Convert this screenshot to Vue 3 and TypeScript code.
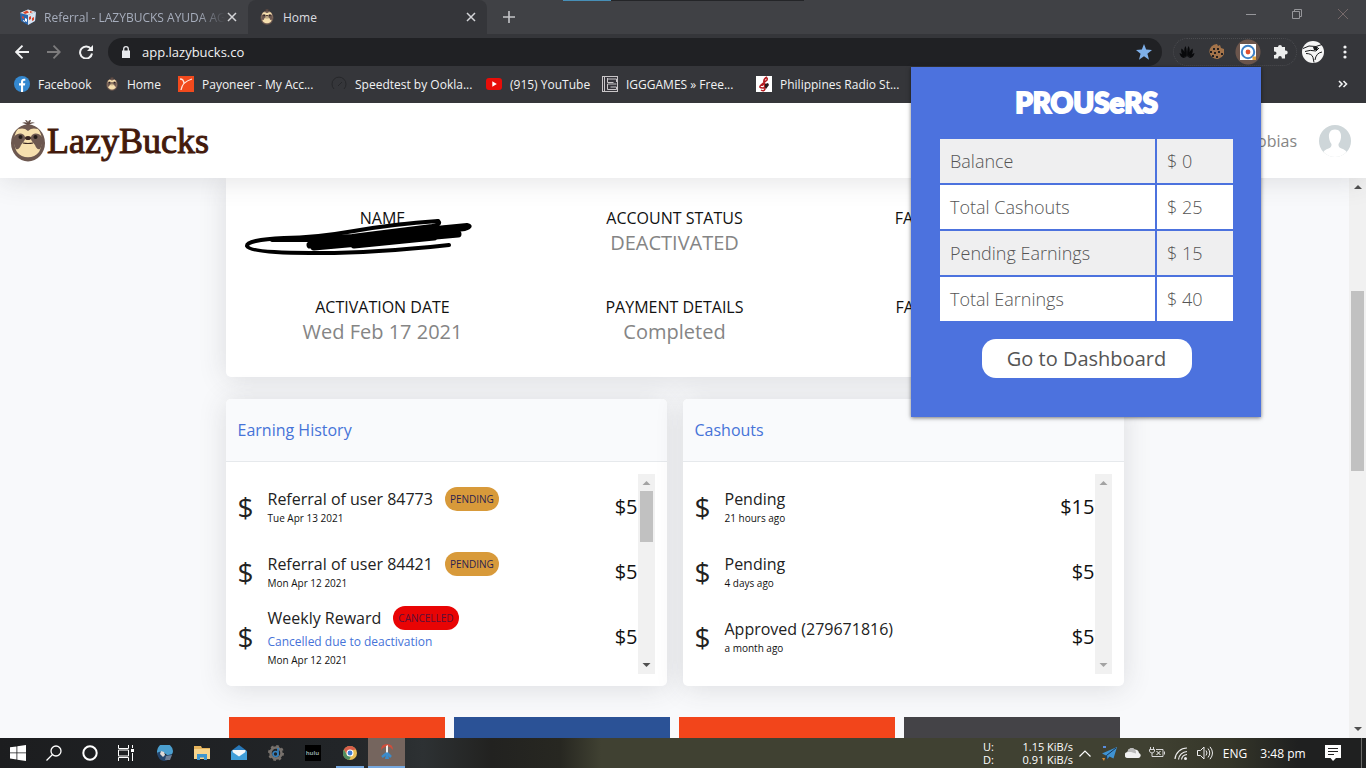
<script setup lang="ts">
interface Earning {
  title: string
  date: string
  amount: string
  badge?: 'Pending' | 'Cancelled'
  note?: string
}

const bookmarks = [
  { icon: 'facebook', label: 'Facebook' },
  { icon: 'sloth', label: 'Home' },
  { icon: 'payoneer', label: 'Payoneer - My Acc...' },
  { icon: 'gauge', label: 'Speedtest by Ookla...' },
  { icon: 'youtube', label: '(915) YouTube' },
  { icon: 'igg', label: 'IGGGAMES » Free...' },
  { icon: 'music', label: 'Philippines Radio St...' },
]

const stats = [
  { label: 'NAME', value: '', struck: true },
  { label: 'ACCOUNT STATUS', value: 'DEACTIVATED', struck: false },
  { label: 'FACEBOOK STATUS', value: '', struck: false },
  { label: 'ACTIVATION DATE', value: 'Wed Feb 17 2021', struck: false },
  { label: 'PAYMENT DETAILS', value: 'Completed', struck: false },
  { label: 'FACEBOOK GROUP', value: '', struck: false },
]

const earnings: Earning[] = [
  { title: 'Referral of user 84773', date: 'Tue Apr 13 2021', amount: '$5', badge: 'Pending' },
  { title: 'Referral of user 84421', date: 'Mon Apr 12 2021', amount: '$5', badge: 'Pending' },
  { title: 'Weekly Reward', date: 'Mon Apr 12 2021', amount: '$5', badge: 'Cancelled', note: 'Cancelled due to deactivation' },
]

const cashouts: Earning[] = [
  { title: 'Pending', date: '21 hours ago', amount: '$15' },
  { title: 'Pending', date: '4 days ago', amount: '$5' },
  { title: 'Approved (279671816)', date: 'a month ago', amount: '$5' },
]

const panels = [
  { title: 'Earning History', rows: earnings, scrolls: true },
  { title: 'Cashouts', rows: cashouts, scrolls: false },
]

const totals = [
  { label: 'Balance', value: '$ 0' },
  { label: 'Total Cashouts', value: '$ 25' },
  { label: 'Pending Earnings', value: '$ 15' },
  { label: 'Total Earnings', value: '$ 40' },
]
</script>

<template>
  <div class="desktop">
    <svg class="defs" width="0" height="0" aria-hidden="true">
      <symbol id="sloth" viewBox="0 0 34 42">
        <path d="M17 6c-2-2-4-3-6-3 2-1 4-1 5 0l-2-3c2 0 3 1 3 3 0-2 1-3 3-3l-1 3c1-1 3-1 5 0-3 0-5 1-7 3z" fill="#5f4a42" />
        <ellipse cx="17" cy="23" rx="17" ry="18.500" fill="#6d5850" />
        <path d="M17 9c4-3 10-2 12 3 3 6 2 15-1 20-5 7-17 7-22 0-3-5-4-14-1-20 2-5 8-6 12-3z" fill="#f6dfae" />
        <path d="M7 9c3-3 6-4 10-4s7 1 10 4c-4-1-7-1-10 2-3-3-6-3-10-2z" fill="#6d5850" />
        <path d="M3 17c4-5 10-4 11 0 1 3-2 5-4 8-1 3-3 5-5 4-2-3-3-8-2-12zM31 17c-4-5-10-4-11 0-1 3 2 5 4 8 1 3 3 5 5 4 2-3 3-8 2-12z" fill="#6d5850" />
        <circle cx="9.500" cy="17" r="2" fill="#221a18" />
        <circle cx="24.500" cy="17" r="2" fill="#221a18" />
        <ellipse cx="17" cy="18" rx="3" ry="2" fill="#3a2622" />
        <path d="M12 23q5 1 10 0" fill="none" stroke="#3a2622" stroke-width="1.200" />
      </symbol>
    </svg>

    <header class="browser">
      <div class="tabs">
        <span class="edge-line"></span>
        <div class="tab">
          <svg class="i16" viewBox="0 0 16 16"><path d="M0 4l8-3.500L16 3l-1 9-7 4-7-4z" fill="#2c67ae" /><path d="M0 4l8-3.500L16 3 8 6z" fill="#e8e5e2" /><path d="M3 3.500l4-2 2 2-4 1.500zM10 2l3 1-3 1z" fill="#d9452c" /><path d="M8 6v10l7-4 1-9z" fill="#d9e3ef" /><path d="M9 8l2-1v3l-2 1zM12 9l2-1v3l-2 1zM2 7l2 1v2l-2-1z" fill="#d9452c" /><path d="M5 9l2 1v3l-2-1zM3 11l2 1v1l-2-1z" fill="#fff" /></svg>
          <span class="tab-title faded">Referral - LAZYBUCKS AYUDA AG</span>
          <button class="bare" aria-label="Close tab"><svg class="i10" viewBox="0 0 10 10"><path d="M1 1l8 8M9 1L1 9" /></svg></button>
        </div>
        <div class="tab active">
          <svg class="i16"><use href="#sloth" /></svg>
          <span class="tab-title">Home</span>
          <button class="bare" aria-label="Close tab"><svg class="i10" viewBox="0 0 10 10"><path d="M1 1l8 8M9 1L1 9" /></svg></button>
        </div>
        <button class="bare new-tab" aria-label="New tab"><svg width="12" height="12" viewBox="0 0 12 12"><path d="M6 0v12M0 6h12" stroke="#c4c5c8" stroke-width="1.600" /></svg></button>
        <div class="window-buttons">
          <button class="bare" aria-label="Minimize"><svg class="i10" viewBox="0 0 10 10"><path d="M0 5.500h10" /></svg></button>
          <button class="bare" aria-label="Restore"><svg class="i10" viewBox="0 0 10 10"><path d="M.5 2.500h7v7h-7zM2.500 2.500v-2h7v7h-2" /></svg></button>
          <button class="bare" aria-label="Close"><svg class="i10 dim" viewBox="0 0 10 10"><path d="M0 0l10 10M10 0L0 10" /></svg></button>
        </div>
      </div>

      <div class="toolbar">
        <button class="bare nav" aria-label="Back"><svg width="14" height="14" viewBox="0 0 14 14"><path d="M14 7H1M7.500 .7L1.200 7l6.300 6.300" fill="none" stroke="#f1f2f3" stroke-width="1.900" /></svg></button>
        <button class="bare nav" aria-label="Forward"><svg width="14" height="14" viewBox="0 0 14 14"><path d="M0 7h13M6.500 .7L12.800 7l-6.300 6.300" fill="none" stroke="#7d7c7d" stroke-width="1.800" /></svg></button>
        <button class="bare nav" aria-label="Reload"><svg width="14" height="14" viewBox="0 0 14 14"><path d="M12 4A6 6 0 1 0 13 8.500" fill="none" stroke="#f1f2f3" stroke-width="2" /><path d="M14 0v6H8z" fill="#f1f2f3" /></svg></button>
        <label class="omnibox">
          <svg width="8" height="12" viewBox="0 0 8 12"><path d="M0 4.500h8V12H0z" fill="#e8eaed" /><path d="M1.700 5V3a2.300 2.300 0 0 1 4.600 0v2" fill="none" stroke="#e8eaed" stroke-width="1.300" /></svg>
          <input aria-label="Address" value="app.lazybucks.co" />
          <svg width="16" height="16" viewBox="0 0 14 14"><path d="M7 0l1.900 4.900 5.100.3-4 3.300 1.400 5.200L7 10.800l-4.400 2.900L4 8.500 0 5.200l5.100-.3z" fill="#7eb0ea" /></svg>
        </label>
        <div class="extensions">
          <button class="bare ext" aria-label="Downloader"><svg class="i16" viewBox="0 0 16 16"><path d="M7.700 13C5 10 4.500 5 6.500 2c1.500 3 1.500 8 1.200 11zM8.300 13c2.700-3 3.200-8 1.200-11-1.500 3-1.500 8-1.200 11zM7 13.500C3 12 1.500 8 2.500 4.500 5 6 6.500 10 7 13.500zM9 13.500c4-1.500 5.500-5.500 4.500-9C11 6 9.500 10 9 13.500zM6 14C3 14 .8 12 .5 9 3 9.500 5 12 6 14zM10 14c3 0 5.200-2 5.500-5-2.500.5-4.500 3-5.500 5z" fill="#08090b" /></svg></button>
          <button class="bare ext" aria-label="Cookies"><svg class="i16" viewBox="0 0 16 16"><path d="M9 0l1 2 2-1 1 3 3 1a7.500 7.500 0 1 1-7-5z" fill="#a3734a" /><path d="M5 4h2v2H5zM9 4h2v2H9zM2 7h2v2H2zM6 8h2v2H6zM10 7h2v2h-2zM13 9h2v2h-2zM4 11h2v2H4zM8 12h2v2H8z" fill="#231f1f" /></svg></button>
          <button class="bare ext lit" aria-label="Prousers"><svg class="i16" viewBox="0 0 16 16"><path d="M0 0h16v16H0z" fill="#fff" /><circle cx="8" cy="8" r="6.200" fill="none" stroke="#3e80c5" stroke-width="2" /><circle cx="8" cy="8" r="2.400" fill="#e0502f" /><path d="M12.500 12.500H16V16h-3.500z" fill="#dfa13c" /></svg></button>
          <button class="bare ext" aria-label="Extensions"><svg width="15" height="15" viewBox="0 0 15 15"><path d="M5 3a2 2 0 1 1 4 0h3v3.500h.7a2 2 0 0 1 0 4H12V14.500H8.800v-.8a1.800 1.800 0 0 0-3.600 0v.8H1V11h.7a1.800 1.800 0 0 0 0-3.600H1V3z" fill="#eceded" /></svg></button>
        </div>
        <button class="bare avatar" aria-label="Profile"><svg width="22" height="22" viewBox="0 0 22 22"><circle cx="11" cy="11" r="11" fill="#f5f5f5" /><path d="M1 7.500l6-2.500 7 .5 6-2M3 10.500q5-2 11-.5l3-3M4 12.500q6 0 7 4l1 5M20 11q-6 1-7 8" fill="none" stroke="#17181a" /><path d="M11 6h5l-1 3h-3z" fill="#17181a" /></svg></button>
        <button class="bare menu" aria-label="Menu"><svg width="4" height="14" viewBox="0 0 4 14"><g fill="#f1f2f3"><circle cx="2" cy="2" r="1.600" /><circle cx="2" cy="7" r="1.600" /><circle cx="2" cy="12" r="1.600" /></g></svg></button>
      </div>

      <nav class="bookmarks" aria-label="Bookmarks">
        <a v-for="b in bookmarks" :key="b.icon" href="#">
          <svg v-if="b.icon === 'facebook'" class="i16" viewBox="0 0 16 16"><circle cx="8" cy="8" r="8" fill="#3488cf" /><path d="M7 16V9.500H5V7.300h2V5.700C7 3.700 8.200 2.700 10 2.700h1.300v2h-1c-.9 0-1.200.5-1.200 1.200v1.400h2.200l-.4 2.200H9.100V16z" fill="#fff" /></svg>
          <svg v-else-if="b.icon === 'sloth'" class="i14"><use href="#sloth" /></svg>
          <svg v-else-if="b.icon === 'payoneer'" class="i16" viewBox="0 0 16 16"><path d="M0 0h16v16H0z" fill="#f24a1d" /><path d="M2 3q4 0 4 5M3 14q1-8 11-11" fill="none" stroke="#ffe6dc" stroke-width="1.300" /></svg>
          <svg v-else-if="b.icon === 'gauge'" class="i16" viewBox="0 0 16 16"><path d="M3 13a7 7 0 1 1 10 0M7 10l4-4" fill="none" stroke="#26272a" /></svg>
          <svg v-else-if="b.icon === 'youtube'" class="i16" viewBox="0 0 16 16"><rect y="2" width="16" height="12" rx="3" fill="#e80d08" /><path d="M6.300 5.300v5.400L10.800 8z" fill="#fff" /></svg>
          <svg v-else-if="b.icon === 'igg'" class="i16" viewBox="0 0 16 16"><path d="M0 0h16v16H0z" fill="#c9c6c8" /><path d="M1 1h14v14H1z" fill="#35343a" /><path d="M2.500 1v14M5.500 3h9M5.500 2v4.500h6M14.500 3v3M5.500 8h9M5.500 8v5.500h9V11h-6" fill="none" stroke="#c9c6c8" /></svg>
          <svg v-else class="i16" viewBox="0 0 16 16"><path d="M0 0h16v16H0z" fill="#fff" /><path d="M11 1q-4 2-3 6l1 6q-1 3-4 1M9 2q3-1 2 2L5 9q-3 3 2 3 5-1 2-4-3 0-3 2" fill="none" stroke="#b51e22" stroke-width="1.500" /><path d="M9 8l3-1 1 2-3 4-1-2z" fill="#27191b" /></svg>
          <span>{{ b.label }}</span>
        </a>
        <button class="bare more" aria-label="More bookmarks"><svg width="10" height="8" viewBox="0 0 10 8"><path d="M1 1l3 3-3 3M5.500 1l3 3-3 3" fill="none" stroke="#f1f2f3" stroke-width="1.600" /></svg></button>
      </nav>

      <section class="popup">
        <h1>PROUSeRS</h1>
        <table>
          <tbody>
            <tr v-for="t in totals" :key="t.label">
              <th scope="row">{{ t.label }}</th>
              <td>{{ t.value }}</td>
            </tr>
          </tbody>
        </table>
        <button class="dashboard">Go to Dashboard</button>
      </section>
    </header>

    <div class="site">
      <header class="site-head">
        <a class="brand" href="#"><svg width="34" height="42"><use href="#sloth" /></svg><span>LazyBucks</span></a>
        <a class="account" href="#">
          <span>Tobias</span>
          <svg width="32" height="32" viewBox="0 0 32 32"><circle cx="16" cy="16" r="16" fill="#ced6d9" /><path d="M16 4.500c4.500 0 6.500 3.500 6 8-.3 3-1.300 5-2.500 6.500-.2 2.500.5 3.500 3 4.500 3 1.200 4.500 2 5 3.500A16 16 0 0 1 16 32 16 16 0 0 1 4.500 27c.5-1.500 2-2.300 5-3.500 2.500-1 3.200-2 3-4.500-1.200-1.500-2.200-3.500-2.500-6.500-.5-4.500 1.500-8 6-8z" fill="#fff" /></svg>
        </a>
      </header>

      <div class="viewport">
        <main class="content">
          <div class="column">
            <dl class="card stats">
              <div v-for="s in stats" :key="s.label" class="stat">
                <dt>{{ s.label }}</dt>
                <dd>{{ s.value }}</dd>
                <svg v-if="s.struck" class="scribble" viewBox="0 0 228 40" aria-hidden="true">
                  <g fill="none" stroke="#000" stroke-linecap="round" stroke-linejoin="round">
                    <path d="M194 3Q150 6 110 13T40 20Q2 22 3 28Q6 35 66 35Q120 36 205 27" stroke-width="4" />
                    <path d="M194 3q4 3-6 5L108 18 28 22h40l155-15q6 1-2 4l-60 7" stroke-width="4" />
                    <path d="M84 23l120-12M66 27l70-8M70 29l144-13M90 26l110-10M110 27l80-8" stroke-width="7" />
                  </g>
                </svg>
              </div>
            </dl>

            <div class="panels">
              <section v-for="p in panels" :key="p.title" class="card panel">
                <h2>{{ p.title }}</h2>
                <div class="panel-body">
                  <ul>
                    <li v-for="r in p.rows" :key="r.title + r.date">
                      <span class="dollar">$</span>
                      <div class="entry">
                        <div class="entry-title">{{ r.title }}<span v-if="r.badge" class="badge" :class="r.badge.toLowerCase()">{{ r.badge.toUpperCase() }}</span></div>
                        <div v-if="r.note" class="note">{{ r.note }}</div>
                        <div class="date">{{ r.date }}</div>
                      </div>
                      <span class="amount">{{ r.amount }}</span>
                    </li>
                  </ul>
                  <div class="scrollbar" :class="{ idle: !p.scrolls }">
                    <span class="arrow up faint"></span>
                    <span v-if="p.scrolls" class="thumb"></span>
                    <span class="arrow down"></span>
                  </div>
                </div>
              </section>
            </div>

            <div class="tiles"><span class="orange"></span><span class="blue"></span><span class="orange"></span><span class="grey"></span></div>
          </div>
        </main>
        <div class="scrollbar page-scroll">
          <span class="arrow up"></span>
          <span class="thumb"></span>
          <span class="arrow down"></span>
        </div>
      </div>
    </div>

    <footer class="taskbar">
      <button class="bare task sys" aria-label="Start"><svg class="i16" viewBox="0 0 16 16"><path d="M0 2.300L6.500 1.400v6.100H0zM7.300 1.300L16 0v7.500H7.300zM0 8.300h6.500v6.200L0 13.600zM7.300 8.300H16V16l-8.700-1.300z" fill="#fff" /></svg></button>
      <button class="bare task sys" aria-label="Search"><svg class="i16" viewBox="0 0 16 16"><circle cx="10" cy="6" r="5" fill="none" stroke="#fff" stroke-width="1.300" /><path d="M6.500 9.500L.5 15.500" stroke="#fff" stroke-width="1.300" /></svg></button>
      <button class="bare task sys" aria-label="Cortana"><svg class="i16" viewBox="0 0 16 16"><circle cx="8" cy="8" r="6.700" fill="none" stroke="#fff" stroke-width="2" /></svg></button>
      <button class="bare task sys" aria-label="Task view"><svg class="i16" viewBox="0 0 16 16"><path d="M.5 0v3.500h10V0M.5 16v-3.500h10V16M.5 5h10v6H.5zM14.500 0v3M14.500 8v8" fill="none" stroke="#fff" /><path d="M13 4h3v3h-3z" fill="#fff" /></svg></button>
      <button class="bare task first-app" aria-label="Edge"><svg class="i16" viewBox="0 0 16 16"><path d="M0 7a8 8 0 0 1 16-1c0 4-3 5-6 4l-4-3-5 3z" fill="#4b9fcf" /><path d="M0 8q4-3 7 0 1 3 4 2l4-1q-2 7-8 7-6-1-7-8z" fill="#25466d" /><path d="M4 6l3 1 1 3-2 2-3-3z" fill="#ded9d6" /><path d="M9 11l6-1-2 5H8z" fill="#6f7f96" /></svg></button>
      <button class="bare task" aria-label="File Explorer"><svg class="i16" viewBox="0 0 16 16"><path d="M0 1h7l1 2h8v11H0z" fill="#e6b45c" /><path d="M0 4h16v10H0z" fill="#f7d48b" /><path d="M3 9h10v6h-3v-2.500H6V15H3z" fill="#3e96cf" /></svg></button>
      <button class="bare task" aria-label="Mail"><svg class="i16" viewBox="0 0 16 16"><path d="M0 6l8-6 8 6v9H0z" fill="#2878b8" /><path d="M1.500 5h13v5l-6.500 3-6.500-3z" fill="#f4f7f9" /><path d="M0 6l8 5.500L16 6v9H0z" fill="#419ed8" /></svg></button>
      <button class="bare task" aria-label="Settings"><svg class="i16" viewBox="0 0 16 16"><circle cx="8" cy="8" r="5.500" fill="none" stroke="#77716c" stroke-width="2.500" /><circle cx="8" cy="8" r="7" fill="none" stroke="#77716c" stroke-width="2" stroke-dasharray="2.750" /><circle cx="7.500" cy="9" r="2.500" fill="none" stroke="#3680bd" stroke-width="1.700" /><path d="M10 3v8" stroke="#3680bd" stroke-width="1.700" /></svg></button>
      <button class="bare task"><span class="hulu">hulu</span></button>
      <button class="bare task open" aria-label="Chrome"><svg class="i14" viewBox="0 0 16 16"><circle cx="8" cy="8" r="8" fill="#e8bd55" /><path d="M1 4a8 8 0 0 1 14 0L8 5 5 10z" fill="#d75e4a" /><path d="M1 4l4 7 4 1-2 4A8 8 0 0 1 1 4z" fill="#4f8c60" /><circle cx="8" cy="8" r="4" fill="#fff" /><circle cx="8" cy="8" r="2.800" fill="#3f7bd0" /></svg></button>
      <button class="bare task current" aria-label="Snipping Tool"><svg class="i16" viewBox="0 0 16 16"><path d="M2 6q0-6 6-6 6 0 6 6l-3-3-3-1-4 2z" fill="#cf4d3b" /><path d="M7 2l2-1v9l-2 1z" fill="#f3efeb" /><path d="M8 9l-5 4M8 9l4 4" stroke="#3b8ccb" stroke-width="2.500" /><path d="M7 10h2l1 5H6z" fill="#3b8ccb" /></svg></button>

      <div class="tray">
        <div class="speed"><span>U:</span><span>1.15 KiB/s</span><span>D:</span><span>0.91 KiB/s</span></div>
        <button class="bare tray-icon" aria-label="Hidden icons"><svg width="12" height="7" viewBox="0 0 12 7"><path d="M.5 6.500L6 1l5.500 5.500" fill="none" stroke="#fff" stroke-width="1.200" /></svg></button>
        <button class="bare tray-icon" aria-label="Messenger"><svg class="i16" viewBox="0 0 16 16"><path d="M16 2L1 8.500l4 2 1 4 2.500-3 4 2z" fill="#3f93d3" /><path d="M15 3L5.500 10.500l.5 4" fill="none" stroke="#14355b" /><path d="M2 1h3v2H2z" fill="#5a8ddc" /><path d="M1 13h3l-1 3z" fill="#dd8f38" /></svg></button>
        <button class="bare tray-icon" aria-label="OneDrive"><svg class="i16" viewBox="0 0 16 16"><path d="M3 13a3 3 0 0 1-.5-6 4 4 0 0 1 7-2.500A4 4 0 0 1 14 8a2.600 2.600 0 0 1-.5 5z" fill="#f1f1f1" /><path d="M2.500 7a4 4 0 0 1 7-2.500q2 1 1.500 4L6 7z" fill="#bbb" /></svg></button>
        <button class="bare tray-icon" aria-label="Battery"><svg class="i16" viewBox="0 0 16 16"><path d="M1.500 2v2.500M4.500 2v2.500M.5 4.500h5V6Q5 8 3 8T.5 6zM3 8v3.500h2M7 4.500h7v7H5M15.500 6.500v3" fill="none" stroke="#d8d8d8" /><path d="M7.500 6l4 4M11.500 6l-4 4" stroke="#fff" /></svg></button>
        <button class="bare tray-icon" aria-label="Network"><svg class="i16" viewBox="0 0 16 16"><path d="M2 14A12 12 0 0 1 14 3M5.500 14.500A9 9 0 0 1 14 6.500M8.500 14.500A6 6 0 0 1 14 9.500" fill="none" stroke="#eee" stroke-width="1.200" /><circle cx="12.500" cy="13.500" r="1.500" fill="#eee" /></svg></button>
        <button class="bare tray-icon" aria-label="Volume"><svg class="i16" viewBox="0 0 16 16"><path d="M.5 5.500h3L7 2v12l-3.500-3.500h-3zM9 5.500q2 2.500 0 5M11 3.500q3.500 4.500 0 9M13 1.800q5 6.200 0 12.400" fill="none" stroke="#eee" /></svg></button>
        <button class="bare lang">ENG</button>
        <button class="bare clock">3:48 pm</button>
        <button class="bare notices" aria-label="Notifications"><svg class="i16" viewBox="0 0 16 16"><path d="M0 0h16v13h-5l-3 3-2.500-3H0z" fill="#fff" /><path d="M3 3.500h10M3 6.500h10M3 9.500h6" stroke="#222" stroke-width="1.200" /></svg></button>
      </div>
      <button class="bare peek" aria-label="Show desktop"></button>
    </footer>
  </div>
</template>

<style>
html,
body {
  background: #f8f9fb;
  overflow: hidden;
}
</style>

<style scoped>
* {
  box-sizing: border-box;
}
.desktop {
  height: 100vh;
  display: flex;
  flex-direction: column;
  font-family: "Open Sans", "Noto Sans", sans-serif;
  color: #111;
}
.defs {
  position: absolute;
}
svg {
  flex: none;
  display: block;
}
a {
  color: inherit;
  text-decoration: none;
}
.bare {
  display: flex;
  align-items: center;
  justify-content: center;
  padding: 0;
  border: 0;
  background: none;
  color: inherit;
  font: inherit;
}
.i10 {
  width: 10px;
  height: 10px;
  fill: none;
  stroke: #d4d5d8;
}
.i14 {
  width: 14px;
  height: 14px;
}
.i16 {
  width: 16px;
  height: 16px;
}

/* Browser window */
.browser {
  position: relative;
  z-index: 2;
  background: #35363a;
  color: #f1f2f3;
  font-family: "Open Sans", sans-serif;
  font-size: 12px;
}
.tabs {
  position: relative;
  display: flex;
  height: 34px;
  background: #404145;
}
.edge-line {
  position: absolute;
  top: 0;
  left: 563px;
  width: 241px;
  height: 1px;
  background: linear-gradient(90deg, #478fb7 20%, #242528 20%);
}
.tab {
  display: flex;
  align-items: center;
  gap: 8px;
  width: 248px;
  padding: 0 11px 0 20px;
  color: #a6adbc;
}
.tab.active {
  width: 239px;
  padding: 0 11px;
  background: #35363a;
  border-radius: 8px 8px 0 0;
  color: #dcdde0;
}
.tab-title {
  flex: 1;
  overflow: hidden;
  white-space: nowrap;
}
.tab-title.faded {
  margin-right: -6px;
  mask-image: linear-gradient(90deg, #000 85%, transparent);
}
.tab .i10 {
  stroke-width: 1.500;
}
.new-tab {
  width: 44px;
}
.window-buttons {
  display: flex;
  margin-left: auto;
  height: 28px;
}
.window-buttons .bare {
  width: 46px;
}
.window-buttons .i10 {
  stroke: #96969a;
}
.window-buttons .dim {
  stroke: #76696a;
}
.toolbar {
  display: flex;
  align-items: center;
  height: 35px;
  padding: 0 5px 0 6px;
}
.nav {
  width: 32px;
  height: 28px;
}
.omnibox {
  flex: 1;
  display: flex;
  align-items: center;
  gap: 12px;
  height: 28px;
  margin: 0 11px 0 6px;
  padding: 0 10px 0 14px;
  border-radius: 14px;
  background: #202124;
}
.omnibox input {
  flex: 1;
  min-width: 0;
  border: 0;
  padding: 0;
  outline: 0;
  background: none;
  color: #f1f2f3;
  font: 13px "Open Sans", sans-serif;
}
.extensions {
  display: flex;
  height: 28px;
  border-radius: 14px;
  border: 1px dotted #4b4c50;
}
.ext {
  width: 32px;
}
.ext:first-child {
  width: 26px;
}
.ext.lit {
  background: radial-gradient(circle, #6b554c 12px, transparent 13px);
}
.avatar,
.menu {
  width: 32px;
}
.bookmarks {
  display: grid;
  grid-template-columns: 91px 73px 153px 155px 116px 154px 1fr auto;
  align-items: center;
  height: 34px;
  padding: 0 18px 4px 14px;
  white-space: nowrap;
}
.bookmarks a {
  display: flex;
  align-items: center;
  gap: 8px;
}

/* Extension popup */
.popup {
  position: absolute;
  top: 67px;
  right: 105px;
  width: 350px;
  height: 350px;
  padding: 15px 28px 0 29px;
  display: flex;
  flex-direction: column;
  align-items: center;
  background: #4c72de;
  box-shadow: 0 1px 4px #0008;
  color: #555;
}
.popup h1 {
  margin: 0 0 17px;
  font: 900 28px/40px Lato, sans-serif;
  color: #fff;
  -webkit-text-stroke: 2px #fff;
}
.popup table {
  width: 100%;
  border-collapse: separate;
  border-spacing: 0;
}
.popup tr {
  background: #fff;
}
.popup tr:nth-child(odd) {
  background: #efeff0;
}
.popup th,
.popup td {
  height: 46px;
  padding: 0 10px;
  border-bottom: 2px solid #4c72de;
  font-size: 18px;
  font-weight: 300;
  text-align: left;
}
.popup th {
  border-right: 2px solid #4c72de;
}
.popup td {
  width: 76px;
}
.dashboard {
  width: 210px;
  height: 39px;
  margin-top: 16px;
  border: 0;
  border-radius: 14px;
  background: #fff;
  color: #555;
  font: 20px "Open Sans", sans-serif;
}

/* Website */
.site {
  flex: 1;
  min-height: 0;
  display: flex;
  flex-direction: column;
}
.site-head {
  position: relative;
  z-index: 1;
  display: flex;
  align-items: center;
  justify-content: space-between;
  height: 75px;
  padding: 0 15px 0 11px;
  background: #fff;
  box-shadow: 0 2px 28px #3a3b4526;
}
.brand {
  display: flex;
  align-items: center;
  gap: 2px;
  font: 36px/48px "Liberation Serif", serif;
  color: #431a0c;
  -webkit-text-stroke: 1px #431a0c;
}
.account {
  display: flex;
  align-items: center;
  gap: 22px;
  font-size: 16px;
  color: #858585;
}
.viewport {
  flex: 1;
  min-height: 0;
  display: flex;
  background: #f8f9fb;
}
.content {
  flex: 1;
  overflow: hidden;
}
.column {
  max-width: 898px;
  margin: 0 auto;
}
.card {
  background: #fff;
  border-radius: 5px;
  box-shadow: 0 2px 28px #3a3b4526;
}
.stats {
  display: grid;
  grid-template-columns: repeat(3, 1fr);
  margin: 0 0 22px;
  padding: 28px 11px 9px;
  border-radius: 0 0 5px 5px;
}
.stat {
  position: relative;
  height: 89px;
  text-align: center;
}
.stat:nth-child(n + 4) {
  height: 73px;
}
.stat dt {
  font-size: 16px;
  line-height: 24px;
}
.stat dd {
  margin: 0;
  font-size: 20px;
  line-height: 26px;
  color: #858585;
}
.scribble {
  position: absolute;
  left: 7px;
  top: 12px;
  width: 228px;
  height: 40px;
}
.panels {
  display: grid;
  grid-template-columns: 1fr 1fr;
  gap: 16px;
}
.panel h2 {
  margin: 0;
  height: 63px;
  padding: 0 12px;
  border-bottom: 1px solid #e6e9ec;
  border-radius: 5px 5px 0 0;
  background: #f9fafc;
  font-size: 16px;
  font-weight: 500;
  line-height: 62px;
  color: #4673d8;
}
.panel-body {
  display: flex;
  height: 224px;
  padding: 12px;
}
.panel ul {
  flex: 1;
  margin: 0;
  padding: 0;
  list-style: none;
}
.panel li {
  display: flex;
  align-items: center;
  height: 65px;
}
.dollar {
  width: 30px;
  font-size: 28px;
  color: #222;
}
.entry {
  flex: 1;
}
.entry-title {
  display: flex;
  gap: 12px;
  font-size: 16px;
  font-weight: 400;
  line-height: 24px;
  color: #222;
}
.badge {
  padding: 0 5px;
  border-radius: 12px;
  font-size: 10px;
  font-weight: 400;
  color: #2b2350;
}
.badge.pending {
  background: #d89a3a;
}
.badge.cancelled {
  background: #e90404;
  color: #5c1038;
}
.note {
  font-size: 12px;
  line-height: 23px;
  color: #4673d8;
}
.date {
  font-size: 10px;
  line-height: 15px;
}
.amount {
  font-size: 20px;
}
.scrollbar {
  display: flex;
  flex-direction: column;
  align-items: center;
  width: 17px;
  background: #f1f1f1;
}
.arrow {
  flex: none;
  width: 17px;
  height: 17px;
  background: #505050;
}
.arrow.up {
  clip-path: polygon(5px 11px, 9px 7px, 13px 11px);
}
.arrow.down {
  margin-top: auto;
  clip-path: polygon(5px 6px, 13px 6px, 9px 10px);
}
.arrow.faint,
.idle .arrow {
  background: #a3a3a3;
}
.thumb {
  width: 13px;
  height: 51px;
  background: #c1c1c1;
}
.page-scroll .thumb {
  height: 180px;
  margin-top: 96px;
}
.tiles {
  display: grid;
  grid-template-columns: repeat(4, 1fr);
  gap: 9px;
  height: 120px;
  margin-top: 31px;
  padding: 0 4px 0 3px;
}
.orange {
  background: #f2451b;
}
.blue {
  background: #2b5296;
}
.grey {
  background: #444347;
}

/* Taskbar */
.taskbar {
  position: relative;
  z-index: 3;
  display: flex;
  height: 30px;
  background: linear-gradient(90deg, #1c1d1f 0, #222528 25%, #2d3133 31%, #222220 36%, #272721 41%, #404132 44%, #404132 84%, #353629 90%, #1f2020 95%);
  color: #fff;
  font-family: "Open Sans", sans-serif;
  font-size: 12px;
}
.task {
  width: 37px;
}
.task.sys {
  width: 36px;
}
.first-app {
  margin-left: 2px;
}
.hulu {
  width: 16px;
  background: #000;
  color: #8fa3a0;
  font-size: 6px;
  font-weight: 700;
  line-height: 16px;
}
.task.open {
  background: linear-gradient(#76a8df, #76a8df) center bottom / 28px 2px no-repeat;
}
.task.current {
  background: #75655e;
  border-bottom: 2px solid #76a8df;
}
.tray {
  display: flex;
  margin-left: auto;
  padding-right: 8px;
}
.speed {
  display: grid;
  grid-template-columns: 16px 74px;
  align-content: center;
  font-size: 11px;
  line-height: 13px;
}
.speed span:nth-child(even) {
  text-align: right;
}
.tray-icon {
  width: 24px;
}
.lang {
  width: 36px;
}
.clock {
  width: 60px;
}
.notices {
  width: 40px;
}
.peek {
  width: 5px;
  border-left: 1px solid #6a6a68;
}
</style>
